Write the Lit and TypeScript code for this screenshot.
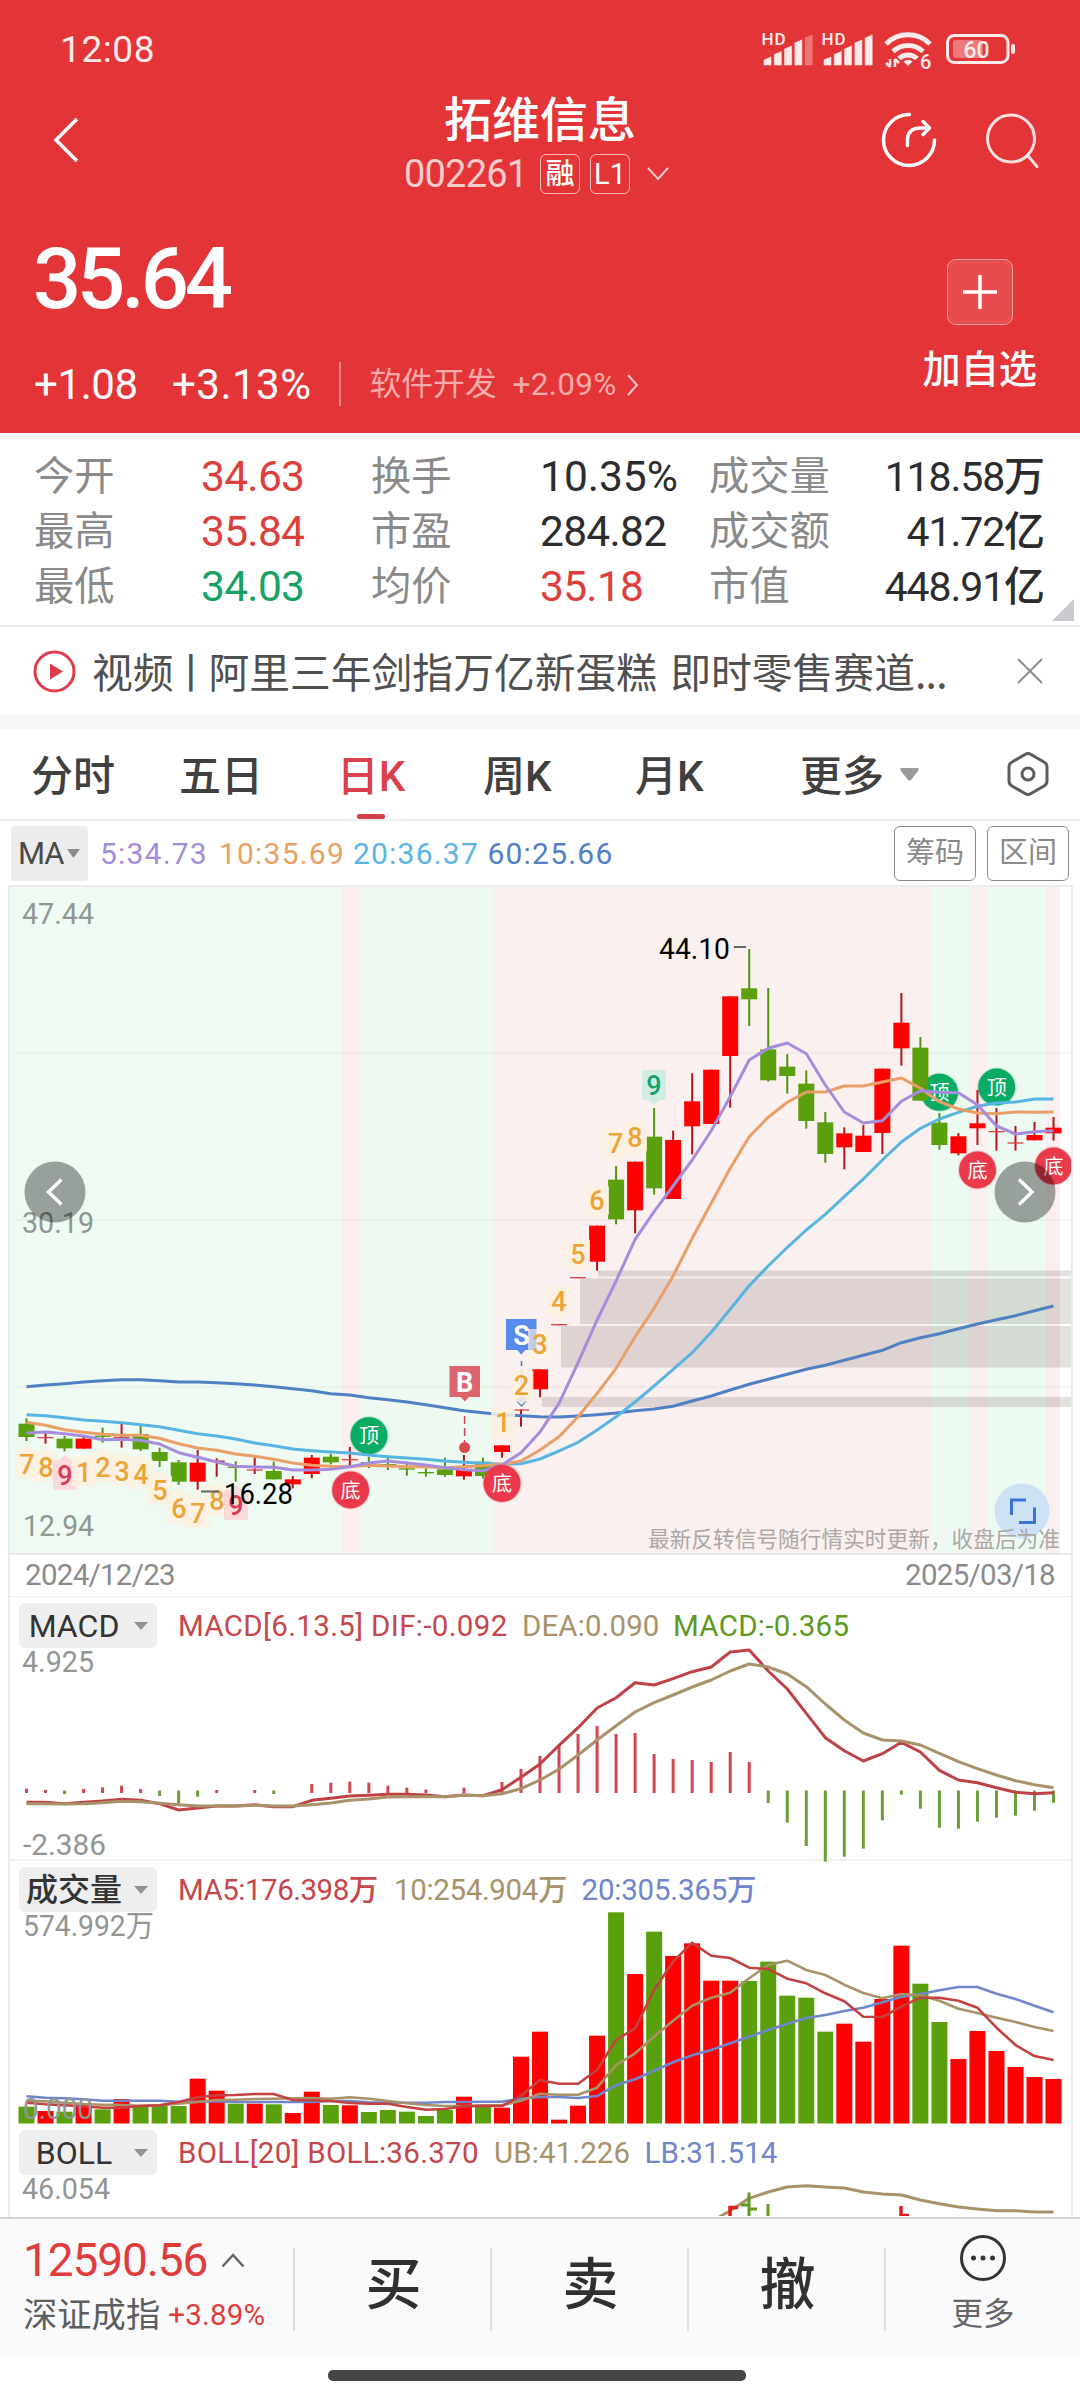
import { LitElement, html, svg, css } from "lit";
import { customElement, property } from "lit/decorators.js";

const RED = "#fe0000";
const GREEN = "#5aa00d";

/** Horizontal centre of the n-th trading day. */
const cx = (i: number) => 26.5 + i * 19.019;

/** Turns a series in thirds of a pixel into polyline points. */
const points = (values: number[], base: number, start = 0) =>
  values.map((v, i) => `${cx(i + start).toFixed(1)},${(base + v / 3).toFixed(1)}`).join(" ");

const line = (values: number[], base: number, color: string, width = 3, start = 0) =>
  svg`<polyline points=${points(values, base, start)} fill="none" stroke=${color} stroke-width=${width} stroke-linejoin="round"></polyline>`;

// colour, body top, body bottom, wick top, wick bottom (thirds of a pixel below 1270)
type Candle = [string, number, number, number, number];
const EARLY: Candle[] = [
  ["g", 461, 501, 445, 513], ["r", 501, 505, 489, 521], ["g", 506, 535, 498, 544], ["r", 506, 536, 500, 536],
  ["g", 497, 501, 473, 518], ["r", 500, 504, 462, 533], ["g", 492, 538, 467, 543], ["g", 546, 573, 533, 591],
  ["g", 577, 635, 570, 645], ["r", 578, 635, 540, 659], ["r", 571, 576, 565, 620], ["g", 590, 594, 574, 635],
  ["r", 598, 602, 562, 612], ["g", 603, 628, 575, 628], ["r", 628, 643, 618, 655], ["r", 563, 612, 555, 625],
  ["g", 560, 577, 551, 583], ["r", 567, 571, 531, 587], ["g", 576, 580, 560, 594], ["g", 582, 586, 563, 600],
  ["g", 595, 599, 575, 617], ["g", 606, 610, 595, 620], ["g", 598, 615, 563, 620], ["r", 600, 619, 555, 629],
  ["g", 575, 618, 563, 625], ["r", 526, 546, 526, 563], ["r", 418, 422, 418, 470], ["r", 298, 358, 298, 382],
  ["r", 162, 166, 162, 166], ["r", 21, 25, 21, 25],
];
// same columns, measured below 880
const LATE: Candle[] = [
  ["r", 1037, 1145, 1037, 1172], ["g", 899, 1018, 858, 1033], ["r", 845, 991, 845, 1060], ["g", 770, 925, 684, 944],
  ["r", 780, 957, 752, 957], ["r", 664, 739, 580, 823], ["r", 569, 732, 569, 732], ["r", 349, 528, 349, 683],
  ["g", 325, 358, 207, 438], ["g", 508, 601, 324, 605], ["g", 560, 588, 522, 641], ["g", 611, 723, 571, 746],
  ["g", 727, 822, 696, 848], ["r", 760, 802, 742, 868], ["r", 767, 816, 735, 816], ["r", 566, 759, 566, 822],
  ["r", 428, 505, 339, 557], ["g", 503, 662, 471, 662], ["g", 728, 795, 699, 809], ["r", 769, 820, 759, 826],
  ["r", 730, 745, 630, 795], ["r", 753, 757, 684, 812], ["r", 787, 791, 738, 812], ["r", 765, 781, 726, 781],
  ["r", 743, 760, 711, 782],
];

const candle = ([c, top, bottom, high, low]: Candle, i: number, base: number) => {
  const x = cx(i);
  const thin = bottom - top < 6;
  const fill = c === "g" ? GREEN : thin ? "#d8474b" : RED;
  return svg`
    <rect x=${x - 1} y=${base + high / 3} width="2" height=${(low - high) / 3} fill=${c === "g" ? "#4f9410" : "#b5161c"}></rect>
    <rect x=${x - 8} y=${base + top / 3} width="16" height=${(bottom - top) / 3} fill=${fill}></rect>`;
};

const MA60 = [350, 345, 341, 336, 332, 329, 329, 332, 336, 336, 338, 341, 345, 350, 356, 362, 371, 375, 383, 389, 396, 404, 413, 422, 428, 434, 437, 440, 441, 438, 434, 429, 422, 417, 409, 393, 378, 360, 343, 328, 313, 298, 286, 271, 256, 241, 218, 203, 191, 176, 162, 149, 137, 122, 108];
const MA20 = [434, 437, 443, 450, 454, 458, 464, 470, 481, 491, 498, 507, 519, 527, 537, 542, 546, 549, 555, 560, 564, 568, 573, 577, 580, 583, 581, 567, 543, 517, 480, 440, 396, 348, 298, 248, 187, 118, 47, -12, -68, -120, -167, -220, -273, -330, -384, -425, -453, -473, -491, -501, -504, -513, -513];
const MA10 = [457, 466, 479, 487, 493, 496, 496, 505, 521, 534, 541, 552, 559, 568, 579, 586, 589, 590, 586, 588, 590, 590, 593, 590, 587, 583, 573, 540, 500, 440, 370, 295, 200, 115, 18, -95, -200, -305, -400, -458, -503, -534, -534, -552, -552, -564, -576, -545, -505, -483, -471, -469, -474, -473, -474];
const MA5 = [489, 486, 491, 498, 509, 508, 511, 522, 548, 562, 576, 589, 591, 592, 600, 600, 598, 590, 579, 573, 579, 585, 593, 599, 602, 585, 548, 486, 400, 278, 150, 33, -92, -175, -252, -330, -418, -520, -630, -665, -681, -649, -555, -474, -441, -448, -506, -538, -533, -532, -496, -432, -408, -415, -418];

const MACD_BARS: [number, number][] = [
  [0, 596], [1, 600], [2, -612], [3, 597], [4, 592], [5, 587], [6, 597], [7, -618], [8, -640], [9, -620], [10, 600],
  [12, 600], [13, -612], [15, 582], [16, 578], [17, 575], [18, 578], [19, 587], [20, 593], [21, 599], [23, 593],
  [25, 576], [26, 537], [27, 498], [28, 465], [29, 432], [30, 408], [31, 432], [32, 429], [33, 492], [34, 507],
  [35, 510], [36, 516], [37, 486], [38, 516], [39, -639], [40, -698], [41, -768], [42, -815], [43, -800], [44, -776],
  [45, -691], [46, -614], [47, -656], [48, -713], [49, -716], [50, -695], [51, -683], [52, -677], [53, -662], [54, -638],
];
const DIF = [637, 637, 641, 637, 633, 628, 631, 641, 660, 654, 648, 648, 644, 650, 650, 631, 625, 618, 616, 613, 613, 615, 620, 615, 617, 599, 562, 522, 466, 413, 354, 323, 278, 285, 266, 245, 231, 186, 180, 243, 297, 370, 443, 482, 513, 491, 457, 486, 541, 570, 578, 593, 607, 611, 608];
const DEA = [641, 641, 642, 641, 638, 634, 635, 640, 644, 648, 648, 648, 646, 648, 648, 644, 639, 631, 627, 621, 620, 620, 620, 616, 617, 611, 596, 570, 538, 495, 450, 407, 366, 338, 315, 291, 270, 243, 222, 231, 252, 290, 342, 390, 429, 450, 453, 465, 490, 515, 536, 555, 572, 584, 593];

const VOLUME = "g740 r753 g755 r737 g748 r717 g738 g737 g738 r656 r692 g731 r731 g733 r759 r695 g735 r736 g756 g750 g755 g768 g750 r710 g741 r743 r590 r515 r779 r737 r527 g157 r342 g215 r288 r250 r362 r362 g363 g305 g407 g413 g515 r491 r545 r417 r257 g371 g486 r597 r513 r573 r621 r651 r657".split(" ");
const V5 = [728, 733, 736, 739, 743, 743, 738, 736, 726, 712, 706, 705, 702, 702, 720, 721, 723, 729, 731, 731, 741, 749, 747, 739, 738, 738, 707, 660, 671, 671, 630, 540, 505, 390, 305, 248, 287, 294, 323, 327, 356, 370, 400, 424, 470, 471, 440, 413, 413, 422, 443, 503, 555, 588, 600];
const V10 = [722, 724, 728, 732, 734, 735, 737, 736, 731, 726, 720, 719, 717, 716, 715, 714, 716, 712, 716, 723, 730, 735, 738, 738, 736, 736, 722, 701, 704, 704, 683, 615, 580, 530, 482, 437, 413, 398, 355, 315, 302, 330, 345, 374, 399, 415, 402, 406, 422, 446, 459, 473, 486, 501, 513];
const V20 = [709, 713, 715, 718, 722, 722, 722, 722, 725, 725, 724, 726, 726, 726, 726, 726, 723, 723, 727, 728, 728, 728, 726, 726, 725, 725, 716, 711, 711, 714, 708, 675, 658, 632, 607, 586, 570, 550, 530, 510, 491, 474, 465, 453, 443, 427, 410, 402, 391, 381, 381, 401, 417, 437, 457];
const UPPER = [1052, 1015, 996, 981, 977, 981, 984, 996, 1002, 1005, 1020, 1031, 1041, 1047, 1052, 1052, 1056, 1056];

const label = (text: string, x: number, y: number, width: number, cls = "axis") =>
  svg`<text class=${cls} x=${x} y=${y} textLength=${width} lengthAdjust="spacingAndGlyphs">${text}</text>`;

const round = (text: string, x: number, y: number, color: string) => svg`
  <circle cx=${x} cy=${y} r="18.5" fill=${color} stroke=${color} stroke-opacity=".25" stroke-width="2"></circle>
  <text class="mark" x=${x} y=${y + 7.6} text-anchor="middle">${text}</text>`;

const COUNTS: [string, number, number, string][] = [
  ["7", 27, 1464, "b"], ["8", 46, 1467, "b"], ["9", 65, 1475, "p"], ["1", 84, 1472, "b"], ["2", 103, 1467, "b"],
  ["3", 122, 1471, "b"], ["4", 141, 1474, "b"], ["5", 160, 1490, "b"], ["6", 179, 1508, "b"], ["7", 198, 1513, "b"],
  ["8", 217, 1500, "b"], ["9", 236, 1505, "p"],
  ["1", 503, 1422, "t"], ["2", 521.5, 1385, "t"], ["4", 559, 1301, "t"], ["5", 578, 1254, "t"],
  ["6", 597, 1200.6, "t"], ["7", 615.7, 1143, "t"], ["8", 635, 1137, "t"], ["9", 654, 1085, "g"],
];
const count = ([n, x, y, kind]: [string, number, number, string]) => {
  const fill = kind === "p" ? "#fbd3d6" : kind === "g" ? "#c9ece0" : "#fcf0e0";
  const ink = kind === "p" ? "#d83a55" : kind === "g" ? "#15a36c" : "#eda437";
  const up = kind === "t" || kind === "g";
  const tip = up ? `M${x - 6},${y + 15}l6,5l6,-5z` : `M${x - 6},${y - 15}l6,-5l6,5z`;
  return svg`
    <rect x=${x - 12} y=${y - 15} width="24" height="30" rx="2" fill=${fill} fill-opacity=".85"></rect>
    <path d=${tip} fill=${fill} fill-opacity=".85"></path>
    <text class="count" x=${x} y=${y + 9.8} text-anchor="middle" fill=${ink}>${n}</text>`;
};

@customElement("status-bar")
class StatusBar extends LitElement {
  static styles = css`
    :host { display: flex; height: 90px; padding: 9px 60px 0 60px; box-sizing: border-box; align-items: center; justify-content: space-between; color: #fdeaea; font-family: Roboto, "Liberation Sans", sans-serif; }
    .time { font-size: 37px; letter-spacing: .6px; }
    svg { display: block; overflow: visible; }
    text { font-family: Roboto, sans-serif; font-weight: 500; fill: #fdeaea; }
  `;
  render() {
    const bars = (x: number, dim: boolean) =>
      [57, 51.5, 46, 40, 35].map((t, i) => svg`<path d="M${x + i * 10.3} 65V${t + 3}L${x + 7 + i * 10.3} ${t}V65z" stroke="#fdeaea" stroke-opacity=${dim && i === 4 ? 0.3 : 1} stroke-width=".6" stroke-linejoin="round" fill="#fdeaea" fill-opacity=${dim && i === 4 ? 0.35 : 1}></path>`);
    return html`
      <span class="time">12:08</span>
      <svg width="260" height="42" viewBox="760 29 260 42">
        <text x="761.500" y="45" font-size="17" textLength="24">HD</text>
        ${bars(764, true)}
        <text x="821.500" y="45" font-size="17" textLength="24">HD</text>
        ${bars(824, false)}
        <g fill="none" stroke="#fdeaea" stroke-width="5" stroke-linecap="butt">
          <path d="M886 44a31 31 0 0 1 44 0"></path>
          <path d="M893 51.500a21.500 21.500 0 0 1 30 0"></path>
          <path d="M899 58.500a13 13 0 0 1 18 0"></path>
        </g>
        <path d="M908 66l-4.500 -4.500a7 7 0 0 1 9 0z" fill="#fdeaea"></path>
        <path d="M890 59v8m-4 -4l4 4M895 67v-8m4 4l-4 -4" stroke="#fdeaea" stroke-width="2.500" fill="none"></path>
        <text x="920" y="69" font-size="20">6</text>
        <rect x="947.500" y="35.500" width="60.500" height="27" rx="7" fill="none" stroke="#fdeaea" stroke-width="3"></rect>
        <rect x="953" y="40" width="30" height="18" rx="3" fill="#fff" fill-opacity=".35"></rect>
        <text x="976.500" y="57.500" font-size="23" text-anchor="middle">60</text>
        <rect x="1011" y="44" width="4" height="10" rx="2" fill="#fdeaea"></rect>
      </svg>`;
  }
}

@customElement("stock-header")
class StockHeader extends LitElement {
  static styles = css`
    :host { display: block; font-family: Roboto, "Noto Sans CJK SC", sans-serif; color: #fff; }
    svg { display: block; fill: none; stroke: #fff; }
    .nav { display: grid; grid-template-columns: 280px 1fr 280px; grid-template-rows: 108px; height: 120px; box-sizing: border-box; align-items: center; }
    .back { padding: 0 0 8px 52px; }
    .tools { display: flex; gap: 45px; padding: 0 0 8px 80px; }
    .mid { display: flex; flex-direction: column; align-items: center; padding-top: 4px; }
    .name { font-size: 48px; line-height: 56px; font-weight: 500; }
    .code { display: flex; align-items: center; height: 50px; gap: 10px; font-size: 38px; color: #f9cccc; line-height: 1; }
    .digits { width: 126px; letter-spacing: -.8px; margin-left: -2px; }
    .tag { width: 38px; height: 38px; border: 1.5px solid #f6bcbc; border-radius: 6px; display: flex; align-items: center; justify-content: center; font-size: 29px; font-weight: 450; color: #fff; box-sizing: content-box; }
    .chev { margin: 0 4px 0 6px; }
    .price-row { display: flex; justify-content: space-between; height: 118px; padding: 25px 67px 0 33px; }
    .price { font-size: 85px; font-weight: 500; letter-spacing: -4.2px; line-height: 88px; }
    .plus { width: 64px; height: 64px; margin-top: 24px; border: 1.5px solid #f29c9d; border-radius: 9px; background: #e74b4d; display: flex; align-items: center; justify-content: center; }
    .change { display: flex; align-items: center; height: 54px; padding: 5px 43px 0 34px; font-size: 42px; line-height: 1; }
    .abs { width: 138px; letter-spacing: -.4px; font-weight: 450; }
    .pct { width: 167px; letter-spacing: .5px; font-weight: 450; }
    .rule { width: 1.5px; height: 44px; background: #ef8485; margin: -2px 29px 0 0; }
    .sector { font-size: 31.800px; color: #f6abab; width: 143px; }
    .delta { font-size: 31.500px; color: #f6abab; width: 112px; letter-spacing: .3px; }
    .add { margin-left: auto; font-size: 38.200px; font-weight: 500; margin-top: -29px; }
  `;
  render() {
    return html`
      <div class="nav">
        <div class="back"><svg width="28" height="48" viewBox="0 0 28 48" stroke-width="3.500"><path d="M25 3L4 24L25 45"></path></svg></div>
        <div class="mid">
          <div class="name">拓维信息</div>
          <div class="code"><span class="digits">002261</span><span class="tag">融</span><span class="tag">L1</span>
            <svg class="chev" width="24" height="16" viewBox="0 0 24 16" stroke-width="2" stroke-opacity=".75"><path d="M2 2L12 13L22 2"></path></svg></div>
        </div>
        <div class="tools">
          <svg width="58" height="58" viewBox="0 0 58 58" stroke-width="3.500" stroke-linecap="round"><path d="M29.500 3.500A25.500 25.500 0 1 0 54.500 29"></path><path d="M27.500 34.500V28Q28 17 41 17H49M43 10.500L49.500 17L43 23.500" stroke-linejoin="round"></path></svg>
          <svg width="58" height="58" viewBox="0 0 58 58" stroke-width="3" stroke-opacity=".85" stroke-linecap="round"><circle cx="28" cy="27.500" r="23.500"></circle><path d="M45 45L54 55.500"></path></svg>
        </div>
      </div>
      <div class="price-row">
        <div class="price">35.64</div>
        <div class="plus"><svg width="34" height="34" viewBox="0 0 34 34" stroke-width="3.500"><path d="M17 0V34M0 17H34"></path></svg></div>
      </div>
      <div class="change">
        <span class="abs">+1.08</span><span class="pct">+3.13%</span><span class="rule"></span>
        <span class="sector">软件开发</span><span class="delta">+2.09%</span>
        <svg width="16" height="24" viewBox="0 0 16 24" stroke-width="2" stroke-opacity=".7"><path d="M3 2L12 12L3 22"></path></svg>
        <span class="add">加自选</span>
      </div>`;
  }
}

@customElement("quote-grid")
class QuoteGrid extends LitElement {
  static styles = css`
    :host { display: block; height: 194px; box-sizing: border-box; padding: 17px 36px 0 34px; border-bottom: 2px solid #ebebed; position: relative; font-family: Roboto, "Noto Sans CJK SC", sans-serif; }
    .row { display: grid; grid-template-columns: 167px 170px 169px 169px 120px 1fr; height: 55px; align-items: center; line-height: 1; font-size: 42.500px; font-weight: 450; color: #2c2c2e; letter-spacing: -.7px; white-space: nowrap; }
    .k { font-size: 40.300px; color: #8a8a8a; letter-spacing: 0; font-weight: 400; }
    .up { color: #dd3f3d; } .down { color: #17a165; }
    .wide { letter-spacing: 0; }
    .last { text-align: right; font-size: 41px; letter-spacing: -1.1px; }
    .fold { position: absolute; right: 6px; bottom: 4px; }
  `;
  render() {
    const rows = [
      ["今开", "34.63", "up", "换手", "10.35%", "wide", "成交量", "118.58万"],
      ["最高", "35.84", "up", "市盈", "284.82", "", "成交额", "41.72亿"],
      ["最低", "34.03", "down", "均价", "35.18", "up", "市值", "448.91亿"],
    ];
    return html`${rows.map((r) => html`<div class="row">
        <span class="k">${r[0]}</span><span class=${r[2]}>${r[1]}</span>
        <span class="k">${r[3]}</span><span class=${r[5]}>${r[4]}</span>
        <span class="k">${r[6]}</span><span class="last">${r[7]}</span></div>`)}
      <svg class="fold" width="22" height="22"><path d="M22 0V22H0z" fill="#c9c9cd"></path></svg>`;
  }
}

@customElement("news-strip")
class NewsStrip extends LitElement {
  static styles = css`
    :host { display: flex; align-items: center; height: 102px; box-sizing: border-box; border-bottom: 14px solid #f6f6f7; padding: 0 37px 0 33px; font-family: "Noto Sans CJK SC", sans-serif; color: #505050; }
    .title { flex: 1; padding-left: 16px; font-size: 40.800px; line-height: 1; white-space: nowrap; }
    .thin { display: inline-block; width: 13px; }
    .sep { margin: 0 -3px; }
    .dots { letter-spacing: -.7px; }
    svg { display: block; }
  `;
  render() {
    return html`
      <svg width="43" height="43" viewBox="0 0 43 43"><circle cx="21.500" cy="21.500" r="19.500" fill="none" stroke="#df3b4b" stroke-width="3"></circle><path d="M17 13.500L30 21.500L17 29.500z" fill="#df3b4b"></path></svg>
      <span class="title">视频<span class="sep">丨</span>阿里三年剑指万亿新蛋糕<span class="thin"> </span>即时零售赛道<span class="dots">...</span></span>
      <svg width="26" height="26" viewBox="0 0 26 26" stroke="#8c8c8c" stroke-width="2"><path d="M1 1L25 25M25 1L1 25"></path></svg>`;
  }
}

@customElement("period-tabs")
class PeriodTabs extends LitElement {
  static styles = css`
    :host { display: grid; grid-template-columns: 148px 158px 146px 152px 165px 206px 1fr; grid-template-rows: 90px; height: 92px; box-sizing: border-box; border-bottom: 2px solid #ebebec; padding-left: 31px; font-family: Roboto, "Noto Sans CJK SC", sans-serif; font-size: 42px; font-weight: 500; color: #404040; line-height: 1; white-space: nowrap; }
    .tab { display: flex; align-items: center; }
    .on { color: #dc3f4b; display: grid; width: 68px; grid-template-rows: 85px 5px; grid-template-columns: 68px; justify-items: center; align-items: center; }
    .bar { width: 28px; height: 5px; border-radius: 2px; background: #d5404b; }
    .tab .caret { margin-left: 16px; }
    .word { padding-top: 5px; }
    .on .word { padding-top: 10px; }
    svg { display: block; }
  `;
  render() {
    return html`
      <div class="tab"><span class="word">分时</span></div><div class="tab"><span class="word">五日</span></div>
      <div class="on"><span class="word">日K</span><span class="bar"></span></div>
      <div class="tab"><span class="word">周K</span></div><div class="tab"><span class="word">月K</span></div>
      <div class="tab"><span class="word">更多</span><svg class="caret" width="19" height="13"><path d="M1 0H18Q19.500 0 18 3L11 12Q9.500 13.500 8 12L1 3Q-.5 0 1 0z" fill="#9a9a9a"></path></svg></div>
      <div class="tab"><svg width="44" height="46" viewBox="0 0 44 46" fill="none" stroke="#5c5c5c" stroke-width="3"><path d="M19 3.500Q22 1.500 25 3.500L38 11Q41 12.500 41 16V30Q41 33.500 38 35L25 42.500Q22 44.500 19 42.500L6 35Q3 33.500 3 30V16Q3 12.500 6 11z"></path><circle cx="22" cy="23" r="6"></circle></svg></div>`;
  }
}

@customElement("ma-legend")
class MaLegend extends LitElement {
  static styles = css`
    :host { display: flex; align-items: center; height: 64px; padding: 0 11px; font-family: Roboto, "Noto Sans CJK SC", sans-serif; line-height: 1; font-size: 30px; font-weight: 450; }
    .pick { width: 77px; height: 55px; box-sizing: border-box; padding-left: 7px; border-radius: 4px; background: #ececec; display: flex; align-items: center; gap: 4px; color: #4a4a4a; font-size: 31px; letter-spacing: -1.1px; }
    .v { letter-spacing: 1.2px; padding-top: 2px; }
    .v1 { width: 119px; margin-left: 12px; color: #a48cdc; }
    .v2 { width: 134px; color: #e8a063; }
    .v3 { width: 134.500px; color: #59b4e1; }
    .v4 { flex: 1; color: #4f80c3; }
    .btn { width: 82px; height: 55px; box-sizing: border-box; border: 1.5px solid #8a8a8a; border-radius: 6px; display: flex; align-items: center; justify-content: center; color: #8a8a8a; font-size: 29px; font-weight: 400; margin-left: 11px; }
  `;
  render() {
    return html`
      <span class="pick">MA<svg width="13" height="9"><path d="M0 0H13L6.500 9z" fill="#8c8c8c"></path></svg></span>
      <span class="v v1">5:34.73</span><span class="v v2">10:35.69</span><span class="v v3">20:36.37</span><span class="v v4">60:25.66</span>
      <span class="btn">筹码</span><span class="btn">区间</span>`;
  }
}

const chartText = css`
  :host { display: block; font-family: Roboto, "Noto Sans CJK SC", sans-serif; }
  svg { display: block; }
  text { font-family: Roboto, "Noto Sans CJK SC", sans-serif; }
  .axis { font-size: 29.500px; fill: #929693; }
  .black { font-size: 29.500px; font-weight: 450; fill: #000; }
  .mark { font-size: 20px; fill: #fff; }
  .count { font-size: 27px; font-weight: 500; }
  .note { font-size: 21.800px; fill: #aaa7a5; }
  .flag { font-size: 27px; font-weight: 700; fill: #fff; }
`;

@customElement("candle-chart")
class CandleChart extends LitElement {
  static styles = [chartText, css`
    .dates { display: flex; justify-content: space-between; align-items: center; height: 44px; border-top: 2px solid #e9e7e7; border-bottom: 1.5px solid #f0efef; padding: 1px 16px 0 15px; font-size: 29.500px; color: #8b8b8b; letter-spacing: -.7px; line-height: 1; box-sizing: border-box; }
  `];
  render() {
    const zones: [number, number, string][] = [
      [10, 342, "#eefaf2"], [342, 361, "#faf0f0"], [361, 493, "#eef9f1"], [493, 931, "#faf0ef"],
      [931, 969, "#edfaf1"], [969, 987, "#faf0f0"], [987, 1046, "#edfaf1"], [1046, 1060, "#f9efee"],
    ];
    return html`
      <svg width="1061" height="666" viewBox="10 887 1061 666">
        ${zones.map(([a, b, c]) => svg`<rect x=${a} y="887" width=${b - a} height="666" fill=${c}></rect>`)}
        ${[1053, 1220, 1387].map((y) => svg`<rect x="16" y=${y - 0.8} width="1055" height="1.500" fill="#000" fill-opacity=".04"></rect>`)}
        <g fill="#1e0000" fill-opacity=".12">
          <rect x="598" y="1270.500" width="473" height="6"></rect>
          <rect x="580" y="1278.500" width="491" height="45.500"></rect>
          <rect x="561" y="1326" width="510" height="41.500"></rect>
          <rect x="542" y="1397" width="529" height="10"></rect>
        </g>
        ${label("47.44", 22, 924, 72)}
        ${label("30.19", 22, 1233, 72)}
        ${label("12.94", 23, 1536, 71)}
        <circle cx="1022" cy="1511" r="27.500" fill="#cde2f5"></circle>
        <path d="M1011.500 1515V1500H1026M1034.500 1507.500V1522.500H1019" fill="none" stroke="#3c74d9" stroke-width="3"></path>
        ${label("最新反转信号随行情实时更新，收盘后为准", 648, 1547, 412, "note")}
        ${round("顶", 939.5, 1092.3, "#0aab64")}
        ${round("顶", 996.7, 1087, "#0aab64")}
        ${round("顶", 369, 1435.7, "#0aab64")}
        ${round("底", 350.6, 1490, "#ea394a")}
        ${EARLY.map((c, i) => candle(c, i, 1270))}
        ${LATE.map((c, i) => candle(c, i + 30, 880))}
        ${line(MA60, 1270, "#4f80c3")}
        ${line(MA20, 1270, "#58b4e0")}
        ${line(MA10, 1270, "#eb9f68")}
        ${line(MA5, 1270, "#a58cdc")}
        <path d="M506 1319h30.500v31h-11l-4.200 4.500l-4.200 -4.500h-11.100z" fill="#588be9"></path>
        <text class="flag" x="521.500" y="1344.500" text-anchor="middle">S</text>
        <path d="M521.500 1361V1398" stroke="#3d78d4" stroke-width="1.500" stroke-dasharray="5 4"></path>
        <path d="M516 1399L521.500 1407L527 1399L521.500 1395z" fill="#8db4ea"></path>
        <path d="M517 1401L521.500 1406L526 1401" fill="none" stroke="#4a7fc8" stroke-width="1.500"></path>
        <rect x="528" y="1329" width="25" height="31" fill="#fdf3e4" fill-opacity=".65"></rect>
        <text class="count" x="540" y="1354" text-anchor="middle" fill="#eda437">3</text>
        <path d="M449.500 1366h30.500v31h-11l-4.200 4.500l-4.200 -4.500h-11.100z" fill="#de6570"></path>
        <text class="flag" x="464.700" y="1391.500" text-anchor="middle">B</text>
        <path d="M464.600 1416V1446" stroke="#c94a4f" stroke-width="1.500" stroke-dasharray="8 4"></path>
        <circle cx="464.600" cy="1447.500" r="5.500" fill="#dc484f"></circle>
        ${COUNTS.map(count)}
        ${round("底", 502, 1483.4, "#ea394a")}
        ${round("底", 977.5, 1170, "#ea394a")}
        ${round("底", 1053.5, 1166, "#ea394a")}
        <path d="M201 1491.500h18M734 947h12" stroke="#666" stroke-width="2"></path>
        ${label("16.28", 224, 1504, 69, "black")}
        ${label("44.10", 659, 959, 71, "black")}
        <g fill="#000" fill-opacity=".36"><circle cx="55" cy="1192" r="30.500"></circle><circle cx="1025" cy="1192" r="30.500"></circle></g>
        <path d="M61.500 1179.500L48.500 1192L61.500 1204.500M1019 1179.500L1032 1192L1019 1204.500" fill="none" stroke="#fff" stroke-width="3.500"></path>
      </svg>
      <div class="dates"><span>2024/12/23</span><span>2025/03/18</span></div>`;
  }
}

@customElement("indicator-head")
class IndicatorHead extends LitElement {
  @property() name = "";
  @property({ attribute: false }) parts: [string, string, number, number][] = [];
  static styles = css`
    :host { display: flex; align-items: flex-end; height: 51px; padding-left: 9px; box-sizing: border-box; line-height: 1; font-family: Roboto, "Noto Sans CJK SC", sans-serif; font-weight: 450; }
    .pick { width: 138px; height: 45px; border-radius: 6px; background: #eeeeef; color: #333; display: grid; grid-template-columns: 110px 28px; align-items: center; font-size: 32px; text-align: center; }
    .pick span { padding-top: 1px; }
    .legend { display: flex; align-items: center; height: 45px; padding: 2px 0 0 21px; box-sizing: border-box; font-size: 29.500px; white-space: nowrap; }
    svg { margin-left: 5px; }
  `;
  render() {
    return html`
      <span class="pick"><span>${this.name}</span><svg width="14" height="8"><path d="M0 0H14L7 8z" fill="#929292"></path></svg></span>
      <div class="legend">${this.parts.map(([t, c, w, s]) => html`<span style="color:${c};width:${w}px;letter-spacing:${s}px">${t}</span>`)}</div>`;
  }
}

const C_RED = "#c5474b", C_TAN = "#a8926a", C_GREEN = "#5e991f", C_BLUE = "#6f86cc";

@customElement("macd-panel")
class MacdPanel extends LitElement {
  static styles = [chartText, css`:host { border-bottom: 2px solid #f0f0f0; height: 264px; box-sizing: border-box; } svg { overflow: visible; }`];
  render() {
    return html`
      <indicator-head name="MACD" .parts=${[["MACD[6.13.5] DIF:-0.092", C_RED, 344, 0.35], ["DEA:0.090", C_TAN, 151, 0.1], ["MACD:-0.365", C_GREEN, 190, 0.3]]}></indicator-head>
      <svg width="1061" height="211" viewBox="10 1648 1061 211">
        ${label("4.925", 22, 1672, 72)}
        ${label("-2.386", 23, 1855, 83)}
        ${MACD_BARS.map(([i, v]) => svg`<line x1=${cx(i)} x2=${cx(i)} y1=${v > 0 ? 1793 : 1790.5} y2=${1590 + Math.abs(v) / 3} stroke=${v > 0 ? "#d04550" : "#6b9e36"} stroke-width="3"></line>`)}
        ${line(DIF, 1590, "#c04145")}
        ${line(DEA, 1590, "#a8926a")}
      </svg>`;
  }
}

@customElement("volume-panel")
class VolumePanel extends LitElement {
  static styles = [chartText, css`:host { height: 263px; } svg { overflow: visible; }`];
  render() {
    return html`
      <indicator-head name="成交量" .parts=${[["MA5:176.398万", C_RED, 216, -0.5], ["10:254.904万", C_TAN, 187.5, -0.35], ["20:305.365万", C_BLUE, 190, -0.2]]}></indicator-head>
      <svg width="1061" height="213" viewBox="10 1912 1061 213">
        ${VOLUME.map((v, i) => {
          const top = 1860 + Number(v.slice(1)) / 3;
          return svg`<rect x=${cx(i) - 8} y=${top} width="16" height=${2123.5 - top} fill=${v[0] === "g" ? GREEN : RED}></rect>`;
        })}
        ${line(V20, 1860, "#6f86cc", 2.6)}
        ${line(V10, 1860, "#a8926a", 2.6)}
        ${line(V5, 1860, "#c5413f", 2.6)}
        ${label("574.992万", 23, 1936, 131)}
        ${label("0.000", 23, 2119, 70)}
      </svg>`;
  }
}

@customElement("boll-panel")
class BollPanel extends LitElement {
  static styles = [chartText, css`:host { height: 92px; overflow: hidden; } svg { overflow: visible; }`];
  render() {
    return html`
      <indicator-head name="BOLL" .parts=${[["BOLL[20] BOLL:36.370", C_RED, 316, 0.3], ["UB:41.226", C_TAN, 150.5, 0.1], ["LB:31.514", C_BLUE, 140, 0.1]]}></indicator-head>
      <svg width="1061" height="42" viewBox="10 2175 1061 42">
        ${label("46.054", 22, 2199, 88)}
        ${line(UPPER, 1860, "#a8926a", 3, 37)}
        <path d="M719 2217L730 2211" stroke="#a8926a" stroke-width="3"></path>
        <path d="M730 2217V2206M728.500 2207.500H738M901 2217V2206M901 2215.500H909" stroke="#e31b20" stroke-width="3.500" fill="none"></path>
        <path d="M749 2217V2192.500M749 2209H757M741 2205H749M768 2217V2204" stroke="#5f9c20" stroke-width="3" fill="none"></path>
      </svg>`;
  }
}

@customElement("trade-bar")
class TradeBar extends LitElement {
  static styles = css`
    :host { display: block; font-family: Roboto, "Noto Sans CJK SC", sans-serif; line-height: 1; }
    .bar { display: grid; grid-template-columns: 293px 197px 197px 197px 1fr; height: 139px; box-sizing: border-box; border-top: 2px solid #d3d3d5; background: #fafafc; }
    .index { padding: 20px 0 0 23px; white-space: nowrap; }
    .big { display: flex; align-items: center; gap: 14px; color: #e03c3b; font-size: 46px; font-weight: 450; letter-spacing: -1.1px; height: 42px; }
    .sub { display: flex; align-items: center; color: #5e5e5e; font-size: 34.300px; height: 36px; margin-top: 16px; }
    .up { color: #e03c3b; font-size: 29.500px; font-weight: 450; padding: 2px 0 0 8px; letter-spacing: .2px; }
    .act, .more { margin: 29px 0 30px; border-left: 2px solid #dedee0; display: flex; align-items: center; justify-content: center; font-size: 56px; font-weight: 500; color: #303030; }
    .more { flex-direction: column; font-size: 31.500px; font-weight: 400; gap: 17px; color: #666; }
    .act span { margin-top: -8px; padding-left: 2px; }
    .more svg { margin-top: -14px; }
    svg { display: block; }
    .home { height: 45px; background: #fff; display: flex; justify-content: center; padding-top: 14px; box-sizing: border-box; }
    .pill { width: 418px; height: 11px; border-radius: 5px; background: #454545; margin-left: -6px; }
  `;
  render() {
    return html`
      <div class="bar">
        <div class="index">
          <div class="big">12590.56<svg width="24" height="15" viewBox="0 0 24 15" fill="none" stroke="#666" stroke-width="2.500"><path d="M1.500 13.500L12 2L22.500 13.500"></path></svg></div>
          <div class="sub">深证成指<span class="up">+3.89%</span></div>
        </div>
        <div class="act"><span>买</span></div><div class="act"><span>卖</span></div><div class="act"><span>撤</span></div>
        <div class="more">
          <svg width="48" height="48" viewBox="0 0 48 48"><circle cx="24" cy="24" r="21.500" fill="none" stroke="#333" stroke-width="3"></circle><g fill="#333"><circle cx="14.500" cy="24" r="2.500"></circle><circle cx="24" cy="24" r="2.500"></circle><circle cx="33.500" cy="24" r="2.500"></circle></g></svg>
          <span>更多</span>
        </div>
      </div>
      <div class="home"><div class="pill"></div></div>`;
  }
}

@customElement("app-root")
class AppRoot extends LitElement {
  static styles = css`
    :host { display: block; width: 1080px; height: 2400px; overflow: hidden; background: #fff; }
    .top { height: 433px; background: #e33537; }
    .charts { margin: 0 7px 0 8px; border: 2px solid #ececec; border-bottom: 0; height: 1332px; box-sizing: border-box; overflow: hidden; }
  `;
  render() {
    return html`
      <div class="top"><status-bar></status-bar><stock-header></stock-header></div>
      <quote-grid></quote-grid>
      <news-strip></news-strip>
      <period-tabs></period-tabs>
      <ma-legend></ma-legend>
      <div class="charts">
        <candle-chart></candle-chart>
        <macd-panel></macd-panel>
        <volume-panel></volume-panel>
        <boll-panel></boll-panel>
      </div>
      <trade-bar></trade-bar>`;
  }
}
